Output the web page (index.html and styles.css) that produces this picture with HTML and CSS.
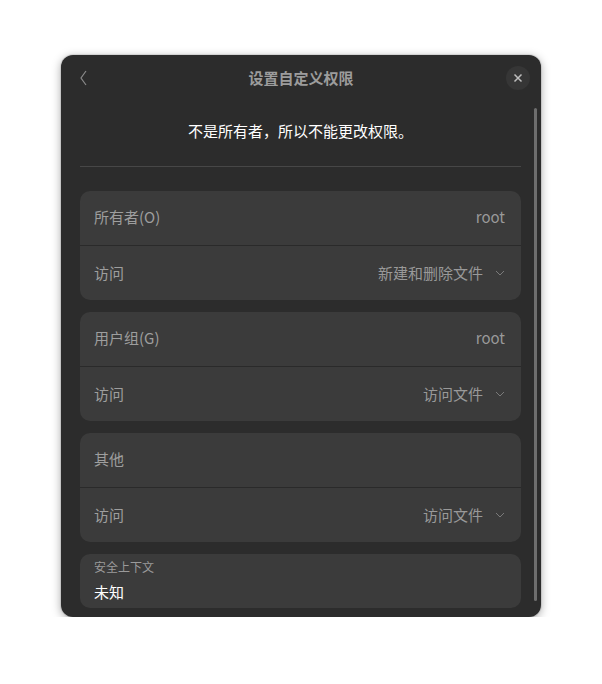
FILE: index.html
```html
<!DOCTYPE html>
<html><head>
<meta charset="utf-8">
<title>设置自定义权限</title>
<link rel="stylesheet" href="styles.css"></head>
<body>
<div class="dialog">
	<div class="header">
		<svg class="back" width="10" height="18" viewBox="0 0 10 18"><polyline points="7,2 2,9 7,16" fill="none" stroke="#8a8a8a" stroke-width="1.2"/></svg>
		<span class="title">设置自定义权限</span>
		<div class="close">
			<svg width="10" height="10" viewBox="0 0 10 10"><path d="M1.5 1.5 L8.5 8.5 M8.5 1.5 L1.5 8.5" stroke="#bdbdbd" stroke-width="1.5"/></svg>
		</div>
	</div>
	<div class="content">
		<p class="msg">不是所有者，所以不能更改权限。</p>
		<div class="sep"></div>

		<div class="card">
			<div class="row"><span>所有者(O)</span><span class="val">root</span></div>
			<div class="row"><span>访问</span><span class="val">新建和删除文件<svg class="chev" width="10" height="6" viewBox="0 0 10 6"><polyline points="1,1 5,5 9,1" fill="none" stroke="#7a7a7a" stroke-width="1"/></svg></span></div>
		</div>
		<div class="card">
			<div class="row"><span>用户组(G)</span><span class="val">root</span></div>
			<div class="row"><span>访问</span><span class="val">访问文件<svg class="chev" width="10" height="6" viewBox="0 0 10 6"><polyline points="1,1 5,5 9,1" fill="none" stroke="#7a7a7a" stroke-width="1"/></svg></span></div>
		</div>
		<div class="card">
			<div class="row"><span>其他</span></div>
			<div class="row"><span>访问</span><span class="val">访问文件<svg class="chev" width="10" height="6" viewBox="0 0 10 6"><polyline points="1,1 5,5 9,1" fill="none" stroke="#7a7a7a" stroke-width="1"/></svg></span></div>
		</div>
		<div class="card context">
			<span class="small">安全上下文</span>
			<span class="big">未知</span>
		</div>
	</div>
	<div class="scrollbar"></div>
</div>
</body>
</html>
```
FILE: styles.css
```css
/* page: white with the dialog floating on it */
body {
	margin: 0;
	background: #ffffff;
	font-family: "Noto Sans CJK SC", "Noto Sans", sans-serif;
}

.dialog {
	position: relative;
	width: 480px;
	height: 562px;
	margin: 55px 0 0 61px;
	background-color: #2c2c2c;
	border-radius: 12px;
	box-shadow: 0 2px 10px rgba(0, 0, 0, .35), 0 0 0 1px rgba(0, 0, 0, .08);
	overflow: hidden;
}

.header {
	height: 46px;
	display: flex;
	align-items: center;
	justify-content: center;
	position: relative;
}
.title {
	color: #9c9c9c;
	font-weight: bold;
	font-size: 15px;
	margin-bottom: 2px;
}
.back {
	position: absolute;
	left: 18px;
	top: 14px;
}
.close {
	position: absolute;
	right: 11px;
	top: 11px;
	width: 24px;
	height: 24px;
	border-radius: 50%;
	background-color: #363636;
	display: flex;
	align-items: center;
	justify-content: center;
}

.content {
	padding: 0 20px 0 19px;
}
.msg {
	margin: 0;
	padding-top: 19px;
	height: 33px;
	text-align: center;
	color: #ffffff;
	font-size: 15px;
	line-height: 22px;
}
.sep {
	height: 1px;
	background-color: #474747;
	margin-top: 13px;
	margin-bottom: 24px;
}

.card {
	background-color: #3b3b3b;
	border-radius: 10px;
	margin-bottom: 12px;
}
.row {
	height: 54px;
	box-sizing: border-box;
	display: flex;
	align-items: center;
	justify-content: space-between;
	padding: 0 16px 3px 14px;
	color: #9e9e9e;
	font-size: 15px;
}
.row + .row {
	border-top: 1px solid #2a2a2a;
	height: 55px;
	padding-bottom: 1px;
}
.val {
	display: flex;
	align-items: center;
	color: #999999;
}
.chev {
	margin-left: 12px;
	margin-top: 1px;
}

.context {
	height: 54px;
	display: flex;
	flex-direction: column;
	padding: 5px 14px 0 14px;
	box-sizing: border-box;
}
.small {
	color: #9a9a9a;
	font-size: 12px;
	line-height: 16px;
}
.big {
	color: #ffffff;
	font-size: 15px;
	line-height: 22px;
	margin-top: 6px;
}

.scrollbar {
	position: absolute;
	right: 4px;
	top: 53px;
	width: 3px;
	height: 493px;
	border-radius: 2px;
	background-color: #6e6e6e;
}
```
